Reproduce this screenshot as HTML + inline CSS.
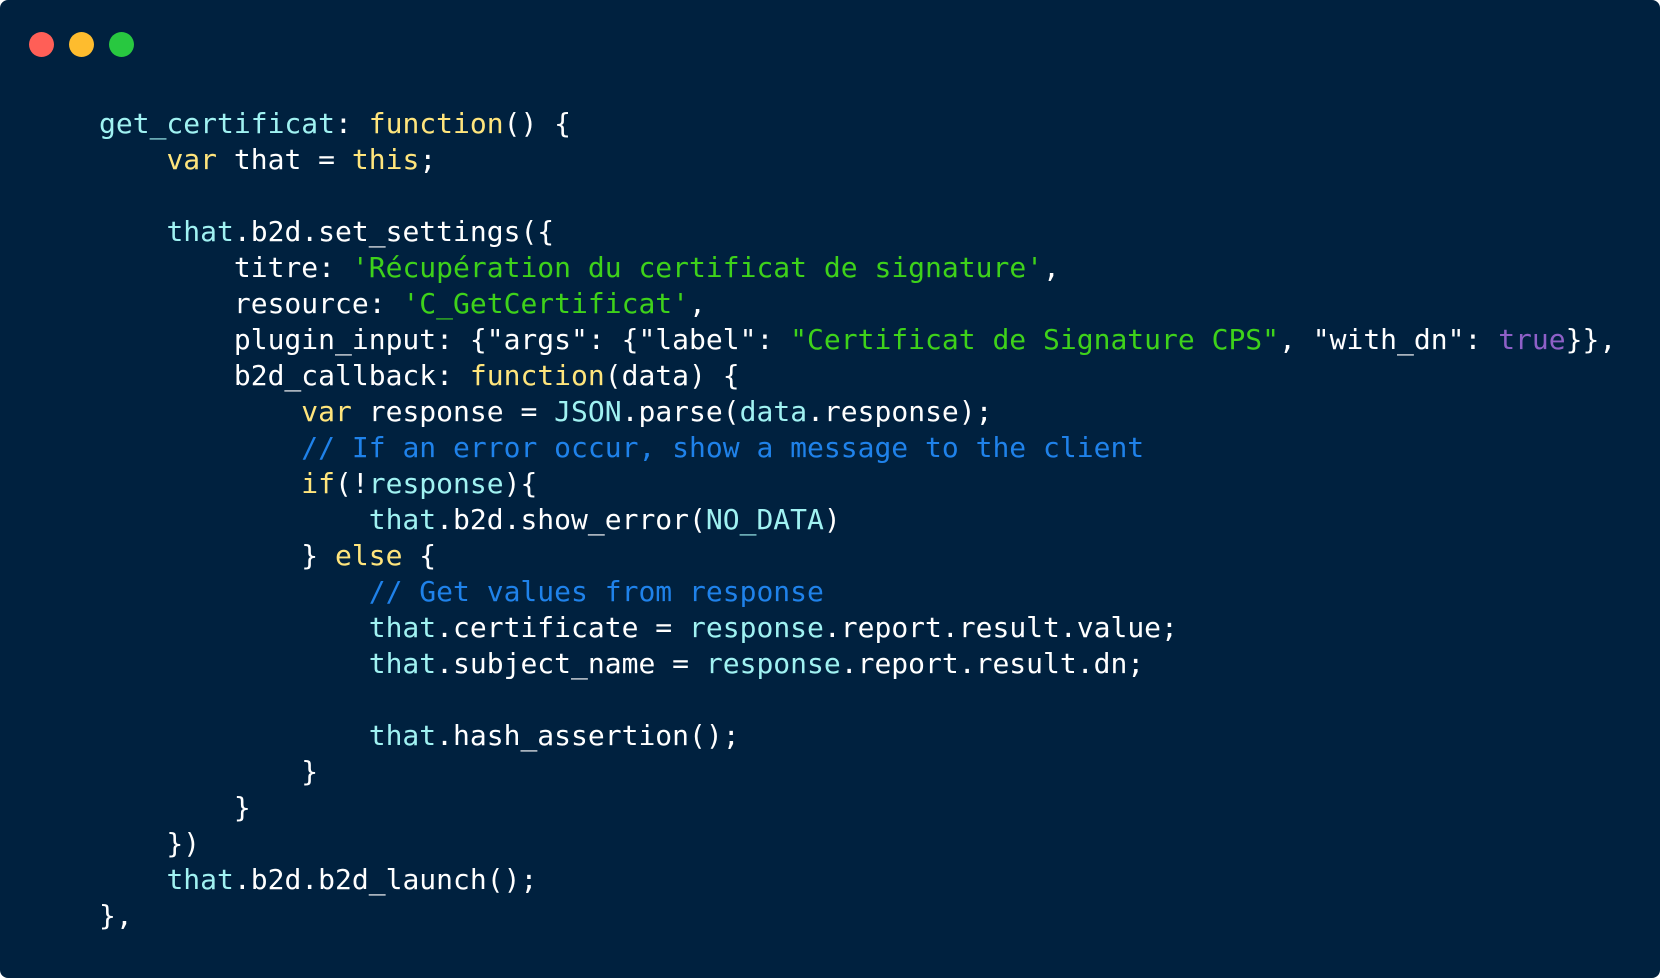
<!DOCTYPE html>
<html><head><meta charset="utf-8"><style>
html,body{margin:0;padding:0;background:#fff;}
.win{position:absolute;left:0;top:0;width:1660px;height:978px;background:#00213f;border-radius:8px;overflow:hidden;}
.d{position:absolute;top:32px;width:25px;height:25px;border-radius:50%;}
pre{position:absolute;left:99px;top:106px;margin:0;font-family:"DejaVu Sans Mono","Liberation Mono",monospace;font-size:28px;line-height:36px;color:#ffffff;}
.c{color:#a0f2f2}.y{color:#ffe57c}.g{color:#3ed21a}.p{color:#8e60c8}.m{color:#1f82ea}
</style></head><body><div class="win">
<div class="d" style="left:29px;background:#ff5f57"></div>
<div class="d" style="left:69px;background:#febc2e"></div>
<div class="d" style="left:109px;background:#28c840"></div>
<pre><span class="c">get_certificat</span>: <span class="y">function</span>() {
    <span class="y">var</span> that = <span class="y">this</span>;

    <span class="c">that</span>.b2d.set_settings({
        titre: <span class="g">'Récupération du certificat de signature'</span>,
        resource: <span class="g">'C_GetCertificat'</span>,
        plugin_input: {"args": {"label": <span class="g">"Certificat de Signature CPS"</span>, "with_dn": <span class="p">true</span>}},
        b2d_callback: <span class="y">function</span>(data) {
            <span class="y">var</span> response = <span class="c">JSON</span>.parse(<span class="c">data</span>.response);
            <span class="m">// If an error occur, show a message to the client</span>
            <span class="y">if</span>(!<span class="c">response</span>){
                <span class="c">that</span>.b2d.show_error(<span class="c">NO_DATA</span>)
            } <span class="y">else</span> {
                <span class="m">// Get values from response</span>
                <span class="c">that</span>.certificate = <span class="c">response</span>.report.result.value;
                <span class="c">that</span>.subject_name = <span class="c">response</span>.report.result.dn;

                <span class="c">that</span>.hash_assertion();
            }
        }
    })
    <span class="c">that</span>.b2d.b2d_launch();
},</pre>
</div></body></html>
